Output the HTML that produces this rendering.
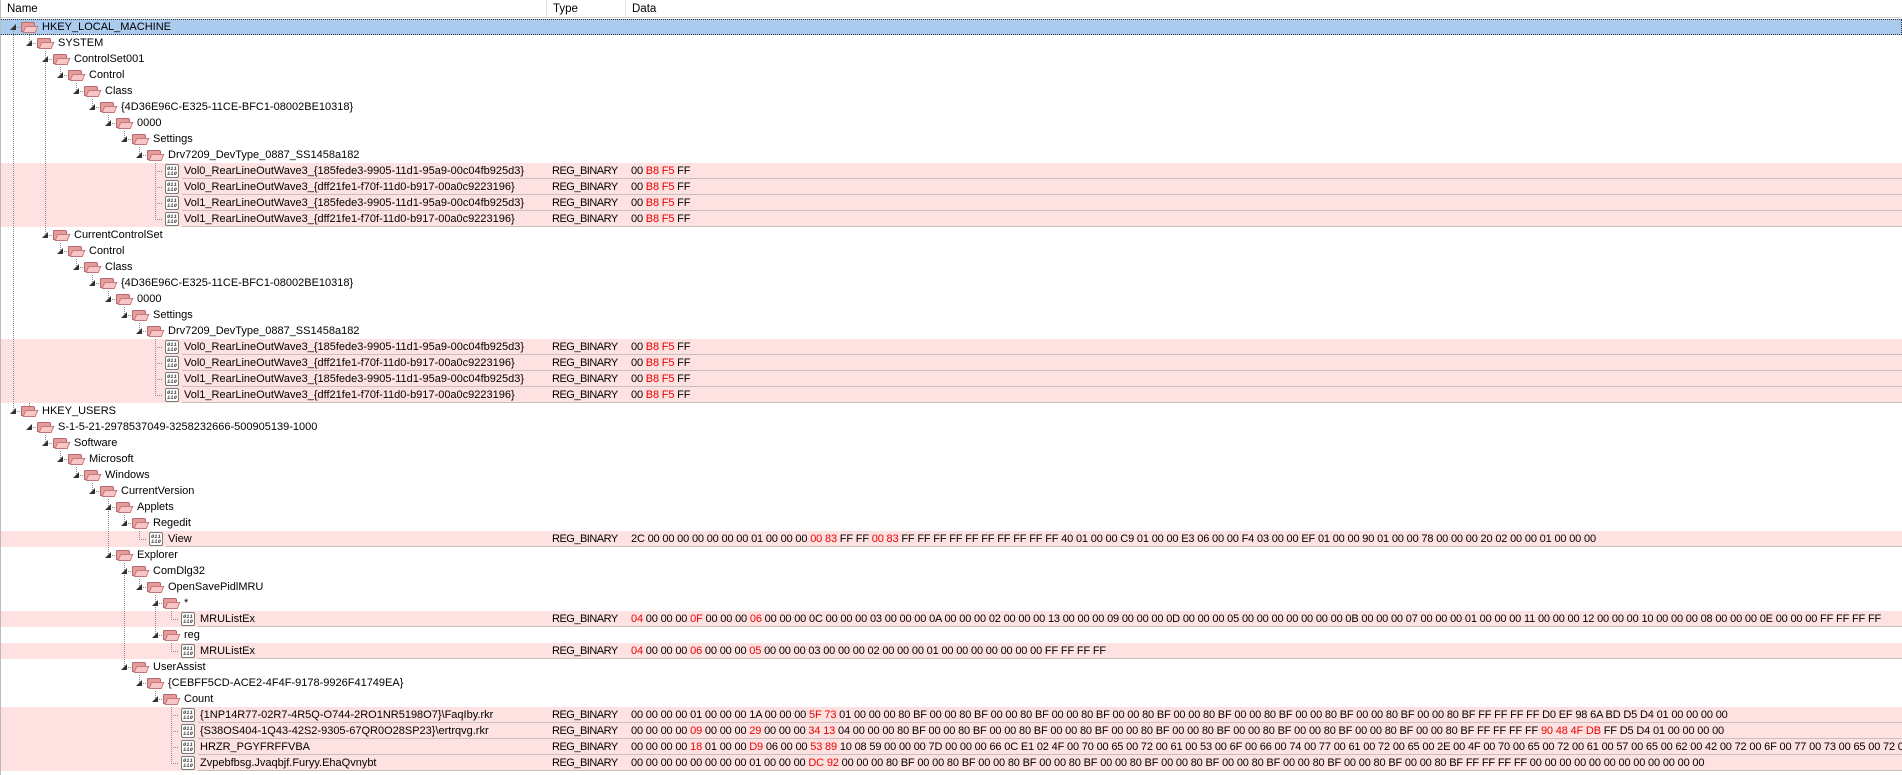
<!DOCTYPE html>
<html><head><meta charset="utf-8">
<style>
html,body{margin:0;padding:0;background:#fff;width:1902px;height:775px;overflow:hidden;font-family:"Liberation Sans",sans-serif;font-size:11px;color:#000}
#hdr{position:absolute;left:0;top:0;width:1902px;height:18px;background:#fff;border-bottom:1px solid #d5d5d5;box-sizing:border-box}
#hdr span{position:absolute;top:3px;font-size:11.5px}
.h1{left:7px}.h2{left:553px}.h3{left:632px}
.sep{position:absolute;top:0;width:1px;height:17px;background:#e3e3e3}
.s1{left:546px}.s2{left:625px}
#rows{position:absolute;left:0;top:19px;width:1902px}
.row{position:relative;width:1902px;height:16px;overflow:hidden}
.pk{background:#fee2e2}
.sel{background:#aacbee;outline:1px dotted #333;outline-offset:-1px}
.n,.ty,.d{position:absolute;top:1px;white-space:nowrap;line-height:14px}
.ty{left:552px;letter-spacing:-0.5px}
.d{left:631px;letter-spacing:-0.17px}
.ul{position:absolute;bottom:0;height:1px;background:#c8c0c0;right:0}
.r{color:#e00}
.ex{position:absolute;top:5px;width:0;height:0;border-left:6px solid transparent;border-bottom:6px solid #333;z-index:3}
.fo{position:absolute;top:3px;width:14px;height:10px;z-index:3}
.fo::before{content:"";position:absolute;left:0;top:0;width:12px;height:8px;background:#e89a9a;border:1px solid #b56a6a;border-radius:1px 2px 0 0}
.fo::after{content:"";position:absolute;left:3px;top:4px;width:11px;height:5px;background:#f8c6c6;border:1px solid #c07878;transform:skewX(-22deg)}
.vi{position:absolute;top:1px;width:12px;height:12px;border:1px solid #777;border-radius:2px;background:#fff;z-index:3;font-family:"Liberation Mono",monospace;font-size:5.5px;line-height:5px;font-weight:bold;color:#444;text-align:center}
.vi::before{content:"011";position:absolute;left:1px;top:1px}
.vi::after{content:"110";position:absolute;left:1px;top:6px}
.L0 .n{left:42px}.L0 .fo{left:21px}.L0 .ex{left:10px}
.L1 .n{left:58px}.L1 .fo{left:37px}.L1 .ex{left:26px}
.L2 .n{left:74px}.L2 .fo{left:53px}.L2 .ex{left:42px}
.L3 .n{left:89px}.L3 .fo{left:68px}.L3 .ex{left:57px}
.L4 .n{left:105px}.L4 .fo{left:84px}.L4 .ex{left:73px}
.L5 .n{left:121px}.L5 .fo{left:100px}.L5 .ex{left:89px}
.L6 .n{left:137px}.L6 .fo{left:116px}.L6 .ex{left:105px}
.L7 .n{left:153px}.L7 .fo{left:132px}.L7 .ex{left:121px}
.L8 .n{left:168px}.L8 .fo{left:147px}.L8 .ex{left:136px}.L8 .vi{left:149px}.L8 .ul{left:166px}
.L9 .n{left:184px}.L9 .fo{left:163px}.L9 .ex{left:152px}.L9 .vi{left:165px}.L9 .ul{left:182px}
.L10 .n{left:200px}.L10 .vi{left:181px}.L10 .ul{left:198px}
#lines{position:absolute;left:0;top:0;z-index:2}
.lb{position:absolute;left:0;top:0;width:1px;height:775px;background:#bbb;z-index:4}
</style></head><body>
<div id="hdr"><span class="h1">Name</span><div class="sep s1"></div><span class="h2">Type</span><div class="sep s2"></div><span class="h3">Data</span></div>
<div id="rows">
<div class="row L0 sel"><i class="ex"></i><i class="fo"></i><span class="n">HKEY_LOCAL_MACHINE</span></div>
<div class="row L1"><i class="ex"></i><i class="fo"></i><span class="n">SYSTEM</span></div>
<div class="row L2"><i class="ex"></i><i class="fo"></i><span class="n">ControlSet001</span></div>
<div class="row L3"><i class="ex"></i><i class="fo"></i><span class="n">Control</span></div>
<div class="row L4"><i class="ex"></i><i class="fo"></i><span class="n">Class</span></div>
<div class="row L5"><i class="ex"></i><i class="fo"></i><span class="n">{4D36E96C-E325-11CE-BFC1-08002BE10318}</span></div>
<div class="row L6"><i class="ex"></i><i class="fo"></i><span class="n">0000</span></div>
<div class="row L7"><i class="ex"></i><i class="fo"></i><span class="n">Settings</span></div>
<div class="row L8"><i class="ex"></i><i class="fo"></i><span class="n">Drv7209_DevType_0887_SS1458a182</span></div>
<div class="row L9 pk"><i class="vi"></i><span class="n">Vol0_RearLineOutWave3_{185fede3-9905-11d1-95a9-00c04fb925d3}</span><span class="ty">REG_BINARY</span><span class="d">00 <span class="r">B8 F5</span> FF</span><b class="ul"></b></div>
<div class="row L9 pk"><i class="vi"></i><span class="n">Vol0_RearLineOutWave3_{dff21fe1-f70f-11d0-b917-00a0c9223196}</span><span class="ty">REG_BINARY</span><span class="d">00 <span class="r">B8 F5</span> FF</span><b class="ul"></b></div>
<div class="row L9 pk"><i class="vi"></i><span class="n">Vol1_RearLineOutWave3_{185fede3-9905-11d1-95a9-00c04fb925d3}</span><span class="ty">REG_BINARY</span><span class="d">00 <span class="r">B8 F5</span> FF</span><b class="ul"></b></div>
<div class="row L9 pk"><i class="vi"></i><span class="n">Vol1_RearLineOutWave3_{dff21fe1-f70f-11d0-b917-00a0c9223196}</span><span class="ty">REG_BINARY</span><span class="d">00 <span class="r">B8 F5</span> FF</span><b class="ul"></b></div>
<div class="row L2"><i class="ex"></i><i class="fo"></i><span class="n">CurrentControlSet</span></div>
<div class="row L3"><i class="ex"></i><i class="fo"></i><span class="n">Control</span></div>
<div class="row L4"><i class="ex"></i><i class="fo"></i><span class="n">Class</span></div>
<div class="row L5"><i class="ex"></i><i class="fo"></i><span class="n">{4D36E96C-E325-11CE-BFC1-08002BE10318}</span></div>
<div class="row L6"><i class="ex"></i><i class="fo"></i><span class="n">0000</span></div>
<div class="row L7"><i class="ex"></i><i class="fo"></i><span class="n">Settings</span></div>
<div class="row L8"><i class="ex"></i><i class="fo"></i><span class="n">Drv7209_DevType_0887_SS1458a182</span></div>
<div class="row L9 pk"><i class="vi"></i><span class="n">Vol0_RearLineOutWave3_{185fede3-9905-11d1-95a9-00c04fb925d3}</span><span class="ty">REG_BINARY</span><span class="d">00 <span class="r">B8 F5</span> FF</span><b class="ul"></b></div>
<div class="row L9 pk"><i class="vi"></i><span class="n">Vol0_RearLineOutWave3_{dff21fe1-f70f-11d0-b917-00a0c9223196}</span><span class="ty">REG_BINARY</span><span class="d">00 <span class="r">B8 F5</span> FF</span><b class="ul"></b></div>
<div class="row L9 pk"><i class="vi"></i><span class="n">Vol1_RearLineOutWave3_{185fede3-9905-11d1-95a9-00c04fb925d3}</span><span class="ty">REG_BINARY</span><span class="d">00 <span class="r">B8 F5</span> FF</span><b class="ul"></b></div>
<div class="row L9 pk"><i class="vi"></i><span class="n">Vol1_RearLineOutWave3_{dff21fe1-f70f-11d0-b917-00a0c9223196}</span><span class="ty">REG_BINARY</span><span class="d">00 <span class="r">B8 F5</span> FF</span><b class="ul"></b></div>
<div class="row L0"><i class="ex"></i><i class="fo"></i><span class="n">HKEY_USERS</span></div>
<div class="row L1"><i class="ex"></i><i class="fo"></i><span class="n">S-1-5-21-2978537049-3258232666-500905139-1000</span></div>
<div class="row L2"><i class="ex"></i><i class="fo"></i><span class="n">Software</span></div>
<div class="row L3"><i class="ex"></i><i class="fo"></i><span class="n">Microsoft</span></div>
<div class="row L4"><i class="ex"></i><i class="fo"></i><span class="n">Windows</span></div>
<div class="row L5"><i class="ex"></i><i class="fo"></i><span class="n">CurrentVersion</span></div>
<div class="row L6"><i class="ex"></i><i class="fo"></i><span class="n">Applets</span></div>
<div class="row L7"><i class="ex"></i><i class="fo"></i><span class="n">Regedit</span></div>
<div class="row L8 pk"><i class="vi"></i><span class="n">View</span><span class="ty">REG_BINARY</span><span class="d">2C 00 00 00 00 00 00 00 01 00 00 00 <span class="r">00 83</span> FF FF <span class="r">00 83</span> FF FF FF FF FF FF FF FF FF FF 40 01 00 00 C9 01 00 00 E3 06 00 00 F4 03 00 00 EF 01 00 00 90 01 00 00 78 00 00 00 20 02 00 00 01 00 00 00</span><b class="ul"></b></div>
<div class="row L6"><i class="ex"></i><i class="fo"></i><span class="n">Explorer</span></div>
<div class="row L7"><i class="ex"></i><i class="fo"></i><span class="n">ComDlg32</span></div>
<div class="row L8"><i class="ex"></i><i class="fo"></i><span class="n">OpenSavePidlMRU</span></div>
<div class="row L9"><i class="ex"></i><i class="fo"></i><span class="n">*</span></div>
<div class="row L10 pk"><i class="vi"></i><span class="n">MRUListEx</span><span class="ty">REG_BINARY</span><span class="d"><span class="r">04</span> 00 00 00 <span class="r">0F</span> 00 00 00 <span class="r">06</span> 00 00 00 0C 00 00 00 03 00 00 00 0A 00 00 00 02 00 00 00 13 00 00 00 09 00 00 00 0D 00 00 00 05 00 00 00 00 00 00 00 0B 00 00 00 07 00 00 00 01 00 00 00 11 00 00 00 12 00 00 00 10 00 00 00 08 00 00 00 0E 00 00 00 FF FF FF FF</span><b class="ul"></b></div>
<div class="row L9"><i class="ex"></i><i class="fo"></i><span class="n">reg</span></div>
<div class="row L10 pk"><i class="vi"></i><span class="n">MRUListEx</span><span class="ty">REG_BINARY</span><span class="d"><span class="r">04</span> 00 00 00 <span class="r">06</span> 00 00 00 <span class="r">05</span> 00 00 00 03 00 00 00 02 00 00 00 01 00 00 00 00 00 00 00 FF FF FF FF</span><b class="ul"></b></div>
<div class="row L7"><i class="ex"></i><i class="fo"></i><span class="n">UserAssist</span></div>
<div class="row L8"><i class="ex"></i><i class="fo"></i><span class="n">{CEBFF5CD-ACE2-4F4F-9178-9926F41749EA}</span></div>
<div class="row L9"><i class="ex"></i><i class="fo"></i><span class="n">Count</span></div>
<div class="row L10 pk"><i class="vi"></i><span class="n">{1NP14R77-02R7-4R5Q-O744-2RO1NR5198O7}\FaqIby.rkr</span><span class="ty">REG_BINARY</span><span class="d">00 00 00 00 01 00 00 00 1A 00 00 00 <span class="r">5F 73</span> 01 00 00 00 80 BF 00 00 80 BF 00 00 80 BF 00 00 80 BF 00 00 80 BF 00 00 80 BF 00 00 80 BF 00 00 80 BF 00 00 80 BF 00 00 80 BF FF FF FF FF D0 EF 98 6A BD D5 D4 01 00 00 00 00</span><b class="ul"></b></div>
<div class="row L10 pk"><i class="vi"></i><span class="n">{S38OS404-1Q43-42S2-9305-67QR0O28SP23}\ertrqvg.rkr</span><span class="ty">REG_BINARY</span><span class="d">00 00 00 00 <span class="r">09</span> 00 00 00 <span class="r">29</span> 00 00 00 <span class="r">34 13</span> 04 00 00 00 80 BF 00 00 80 BF 00 00 80 BF 00 00 80 BF 00 00 80 BF 00 00 80 BF 00 00 80 BF 00 00 80 BF 00 00 80 BF 00 00 80 BF FF FF FF FF <span class="r">90 48 4F DB</span> FF D5 D4 01 00 00 00 00</span><b class="ul"></b></div>
<div class="row L10 pk"><i class="vi"></i><span class="n">HRZR_PGYFRFFVBA</span><span class="ty">REG_BINARY</span><span class="d">00 00 00 00 <span class="r">18</span> 01 00 00 <span class="r">D9</span> 06 00 00 <span class="r">53 89</span> 10 08 59 00 00 00 7D 00 00 00 66 0C E1 02 4F 00 70 00 65 00 72 00 61 00 53 00 6F 00 66 00 74 00 77 00 61 00 72 00 65 00 2E 00 4F 00 70 00 65 00 72 00 61 00 57 00 65 00 62 00 42 00 72 00 6F 00 77 00 73 00 65 00 72 00 2E 00 65 00 78 00 65 00 00 00</span><b class="ul"></b></div>
<div class="row L10 pk"><i class="vi"></i><span class="n">Zvpebfbsg.Jvaqbjf.Furyy.EhaQvnybt</span><span class="ty">REG_BINARY</span><span class="d">00 00 00 00 00 00 00 00 01 00 00 00 <span class="r">DC 92</span> 00 00 00 80 BF 00 00 80 BF 00 00 80 BF 00 00 80 BF 00 00 80 BF 00 00 80 BF 00 00 80 BF 00 00 80 BF 00 00 80 BF 00 00 80 BF FF FF FF FF 00 00 00 00 00 00 00 00 00 00 00 00</span><b class="ul"></b></div>
</div>
<svg id="lines" width="1902" height="775" viewBox="0 0 1902 775"><path fill="none" stroke="#8a8a8a" stroke-width="1" stroke-dasharray="1 1" d="M13.5 27V411 M29.5 35V43 M29.5 403V411 M45.5 51V235 M45.5 435V443 M60.5 67V75 M60.5 243V251 M60.5 451V459 M76.5 83V91 M76.5 259V267 M76.5 467V475 M92.5 99V107 M92.5 275V283 M92.5 483V491 M108.5 115V123 M108.5 291V299 M108.5 499V555 M124.5 131V139 M124.5 307V315 M124.5 515V523 M124.5 563V667 M139.5 147V155 M139.5 323V331 M139.5 531V539 M139.5 579V587 M139.5 675V683 M155.5 163V219 M155.5 339V395 M155.5 595V635 M155.5 691V699 M171.5 611V619 M171.5 643V651 M171.5 707V763 M13 27.5h8 M29 43.5h8 M45 59.5h8 M60 75.5h8 M76 91.5h8 M92 107.5h8 M108 123.5h8 M124 139.5h8 M139 155.5h8 M155 171.5h8 M155 187.5h8 M155 203.5h8 M155 219.5h8 M45 235.5h8 M60 251.5h8 M76 267.5h8 M92 283.5h8 M108 299.5h8 M124 315.5h8 M139 331.5h8 M155 347.5h8 M155 363.5h8 M155 379.5h8 M155 395.5h8 M13 411.5h8 M29 427.5h8 M45 443.5h8 M60 459.5h8 M76 475.5h8 M92 491.5h8 M108 507.5h8 M124 523.5h8 M139 539.5h8 M108 555.5h8 M124 571.5h8 M139 587.5h8 M155 603.5h8 M171 619.5h8 M155 635.5h8 M171 651.5h8 M124 667.5h8 M139 683.5h8 M155 699.5h8 M171 715.5h8 M171 731.5h8 M171 747.5h8 M171 763.5h8"/></svg>
<div class="lb"></div>
</body></html>
